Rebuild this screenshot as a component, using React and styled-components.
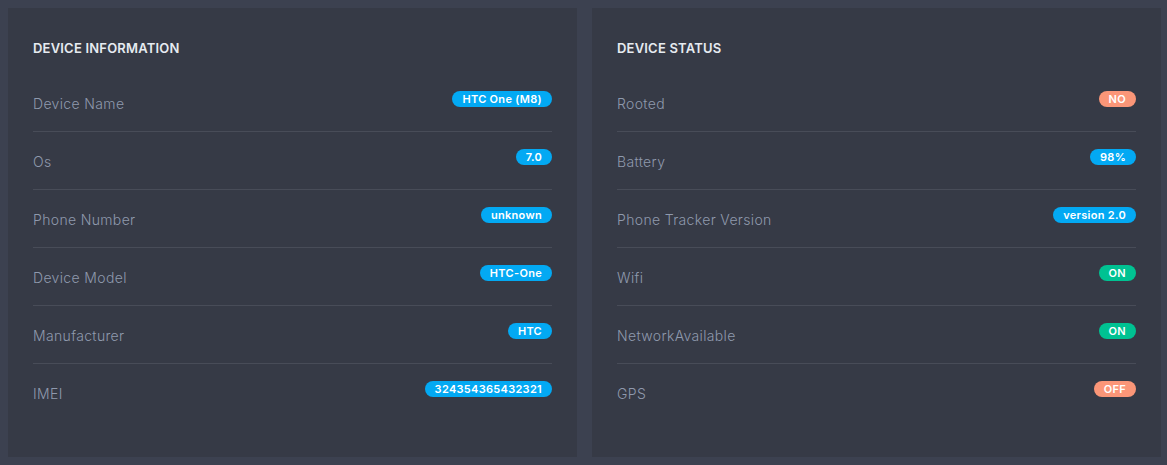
import React from "react";
import styled, { createGlobalStyle } from "styled-components";

const GlobalStyle = createGlobalStyle`
	html, body {
		margin: 0;
		padding: 0;
		background: #3c4150;
		font-family: Inter, "Open Sans", sans-serif;
	}
`;

const Page = styled.div`
	display: grid;
	grid-template-columns: 569px 569px;
	gap: 15px;
	padding: 8px;
	height: 465px;
	box-sizing: border-box;
`;

const Card = styled.div`
	background: #363a46;
	padding: 25px 25px 35px;
	height: 449px;
	box-sizing: border-box;
`;

const Title = styled.h4`
	margin: 0 0 11px;
	height: 30px;
	line-height: 30px;
	font-size: 13px;
	font-weight: 600;
	color: #e6ebf1;
	letter-spacing: 0.2px;
`;

const Row = styled.div`
	display: flex;
	justify-content: space-between;
	align-items: center;
	height: 58px;
	box-sizing: border-box;
	border-bottom: ${(p) => (p.last ? "none" : "1px solid #484c58")};
`;

const Label = styled.span`
	font-size: 14px;
	font-weight: 300;
	color: #8f99ad;
	letter-spacing: 0.35px;
	padding-top: 1px;
`;

const colors = {
	info: "#03a9f3",
	success: "#00c292",
	danger: "#fb9678",
};

const Badge = styled.span`
	align-self: flex-start;
	margin-top: 17px;
	height: 16px;
	line-height: 16px;
	padding: 0 10px;
	border-radius: 8px;
	background: ${(p) => colors[p.kind]};
	color: #fff;
	font-size: 11px;
	font-weight: 600;
	letter-spacing: 0.3px;
`;

const info = [
	["Device Name", "HTC One (M8)", "info"],
	["Os", "7.0", "info"],
	["Phone Number", "unknown", "info"],
	["Device Model", "HTC-One", "info"],
	["Manufacturer", "HTC", "info"],
	["IMEI", "324354365432321", "info"],
];

const status = [
	["Rooted", "NO", "danger"],
	["Battery", "98%", "info"],
	["Phone Tracker Version", "version 2.0", "info"],
	["Wifi", "ON", "success"],
	["NetworkAvailable", "ON", "success"],
	["GPS", "OFF", "danger"],
];

const Panel = ({ title, rows }) => (
	<Card>
		<Title>{title}</Title>
		{rows.map(([label, value, kind], i) => (
			<Row key={label} last={i === rows.length - 1}>
				<Label>{label}</Label>
				<Badge kind={kind}>{value}</Badge>
			</Row>
		))}
	</Card>
);

const App = () => (
	<>
		<GlobalStyle />
		<Page>
			<Panel title="DEVICE INFORMATION" rows={info} />
			<Panel title="DEVICE STATUS" rows={status} />
		</Page>
	</>
);

export default App;
